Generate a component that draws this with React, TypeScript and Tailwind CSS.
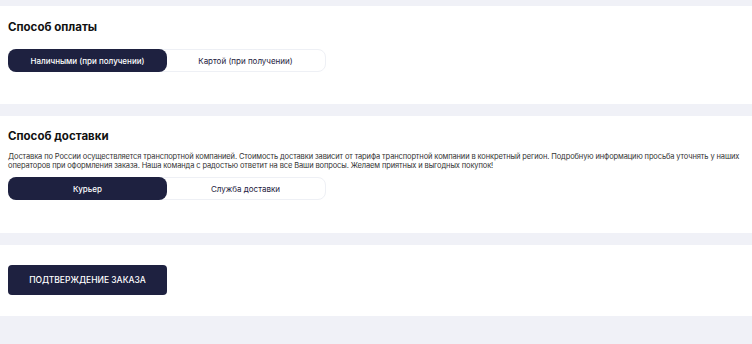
import React, { useState } from 'react';

const font = { fontFamily: 'Inter, "Liberation Sans", sans-serif' };

function Toggle({ options, initial = 0 }: { options: string[]; initial?: number }) {
  const [active, setActive] = useState(initial);
  return (
    <div className="flex w-[318px] h-[23px] rounded-[8px] border border-[#eef0f5] bg-white">
      {options.map((opt, i) => (
        <button
          key={opt}
          onClick={() => setActive(i)}
          className={
            i === active
              ? 'flex-1 rounded-[8px] bg-[#1e2140] text-white text-[8px] font-medium -m-px'
              : 'flex-1 rounded-[8px] text-[#1e2140] text-[8px]'
          }
        >
          {opt}
        </button>
      ))}
    </div>
  );
}

export default function App() {
  return (
    <div className="min-h-[344px] bg-[#f0f1f7] pt-[6px]" style={font}>
      {/* Payment */}
      <section className="bg-white h-[98px] px-2 pt-[15px]">
        <h2 className="text-[11.5px] font-bold text-[#111] leading-[12px]">Способ оплаты</h2>
        <div className="mt-[16px]">
          <Toggle options={['Наличными (при получении)', 'Картой (при получении)']} />
        </div>
      </section>

      {/* Delivery */}
      <section className="bg-white h-[117px] mt-[12px] px-2 pt-[14px]">
        <h2 className="text-[11.5px] font-bold text-[#111] leading-[12px]">Способ доставки</h2>
        <p className="mt-[10px] text-[7.5px] leading-[9px] tracking-[-0.12px] text-[#333]">
          Доставка по России осуществляется транспортной компанией. Стоимость доставки зависит от тарифа транспортной компании в конкретный регион. Подробную информацию просьба уточнять у наших операторов при оформления заказа. Наша команда с радостью ответит на все Ваши вопросы. Желаем приятных и выгодных покупок!
        </p>
        <div className="mt-[7px]">
          <Toggle options={['Курьер', 'Служба доставки']} />
        </div>
      </section>

      {/* Confirm */}
      <section className="bg-white h-[71px] mt-[12px] px-2 pt-[20px]">
        <button className="w-[159px] h-[30px] rounded-[4px] bg-[#1e2140] text-white text-[8.5px] font-medium uppercase">
          Подтверждение заказа
        </button>
      </section>
    </div>
  );
}
